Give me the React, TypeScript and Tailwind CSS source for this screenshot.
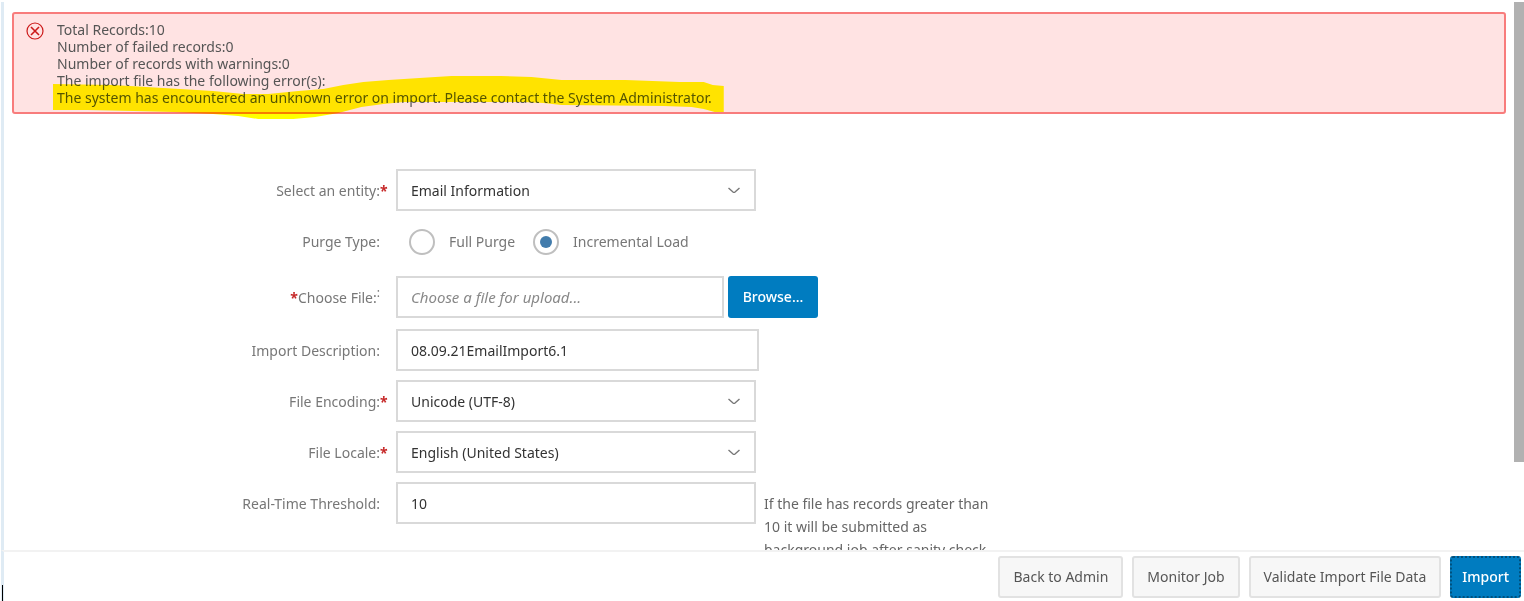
import clsx from "clsx"
import { ReactNode, useState } from "react"

const boxClass =
  "h-[42px] border-2 border-[#d9d9d9] bg-white px-[13px] text-sm text-[#333] outline-none"

const summary = [
  "Total Records:10",
  "Number of failed records:0",
  "Number of records with warnings:0",
  "The import file has the following error(s):",
]

const ErrorIcon = () => (
  <svg
    className="mt-2 ml-3 size-[18px] shrink-0"
    viewBox="0 0 18 18"
    fill="none"
    stroke="#cc1919"
    aria-hidden="true"
  >
    <circle cx="9" cy="9" r="8" strokeWidth="1.2" />
    <path d="M5 5l8 8M13 5l-8 8" strokeWidth="1.6" />
  </svg>
)

// Marker pen stroke over the last line of the message
const Highlight = () => (
  <svg
    className="pointer-events-none absolute -top-[13px] -left-1 h-[43px] w-[calc(100%+16px)] mix-blend-multiply"
    viewBox="0 0 670 43"
    preserveAspectRatio="none"
    aria-hidden="true"
  >
    <path
      fill="#ffff00"
      d="M0 8 L60 9 L110 12 L160 15 L190 18 L215 18 L245 15 L270 13 L290 9 L310 6 L335 4 L366 2 L398 0 L447 0 L478 1 L508 4 L572 4 L626 6 L650 6 L659 9 L670 10 L670 36 L661 36 L650 33 L638 31 L610 30 L508 29 L490 27 L470 26 L440 26 L350 26 L330 28 L308 31 L285 37 L262 41 L240 43 L205 43 L185 40 L160 38 L120 36 L80 35 L34 34 L0 34 Z"
    />
  </svg>
)

const Alert = () => (
  <div
    role="alert"
    className="mr-2 ml-2 flex h-[102px] rounded-[3px] border-2 border-[#f87c7c] bg-[#ffe3e3] text-sm leading-[17px] text-[#555]"
  >
    <ErrorIcon />
    <div className="mt-[7px] ml-[13px]">
      {summary.map((line) => (
        <div key={line}>{line}</div>
      ))}
      <div className="relative w-fit">
        The system has encountered an unknown error on import. Please contact
        the System Administrator.
        <Highlight />
      </div>
    </div>
  </div>
)

const Row = ({
  label,
  htmlFor,
  required,
  className,
  children,
}: {
  label: ReactNode
  htmlFor?: string
  required?: boolean
  className?: string
  children: ReactNode
}) => (
  <div className={clsx("grid grid-cols-[392px_1fr]", className)}>
    <div className="flex h-[42px] items-center justify-end pt-0.5 text-sm text-[#777]">
      <label htmlFor={htmlFor}>{label}</label>
      <span className="w-4 font-bold text-[#c62828]">{required && "*"}</span>
    </div>
    <div className="flex">{children}</div>
  </div>
)

const SelectBox = ({ id, options }: { id: string; options: string[] }) => (
  <div className="relative w-[360px]">
    <select id={id} className={clsx(boxClass, "w-full appearance-none pt-0.5")}>
      {options.map((option) => (
        <option key={option}>{option}</option>
      ))}
    </select>
    <svg
      className="pointer-events-none absolute top-[18px] right-4 h-2 w-3"
      viewBox="0 0 12 8"
      fill="none"
      stroke="#777"
      strokeWidth="1.4"
      aria-hidden="true"
    >
      <path d="M0.5 1L5 5Q6 5.8 7 5L11.5 1" />
    </svg>
  </div>
)

const Radio = ({
  label,
  checked,
  onChange,
}: {
  label: string
  checked: boolean
  onChange: () => void
}) => (
  <label className="flex items-center gap-[14px] text-sm text-[#777]">
    <input
      type="radio"
      name="purge"
      checked={checked}
      onChange={onChange}
      className="size-[26px] appearance-none rounded-full border-2 border-[#bfbfbf] bg-white bg-clip-content p-[5px] checked:bg-[#427cac]"
    />
    {label}
  </label>
)

const FooterButton = ({ children }: { children: ReactNode }) => (
  <button
    type="button"
    className="h-[42px] rounded-[3px] border-2 border-[#e2e2e2] bg-[#f7f7f7] px-[13px] text-sm text-[#555]"
  >
    {children}
  </button>
)

const App = () => {
  const [purge, setPurge] = useState("incremental")
  const [description, setDescription] = useState("08.09.21EmailImport6.1")
  const [threshold, setThreshold] = useState("10")

  return (
    <div className="flex h-screen flex-col bg-white pt-0.5 pl-px font-['Noto_Sans',sans-serif]">
      <div className="flex min-h-0 grow border-l-[3px] border-[#dfebf4]">
        <main className="grow overflow-hidden pt-[10px]">
          <Alert />
          <form className="mt-[55px] flex flex-col gap-[9px]">
            <Row label="Select an entity:" htmlFor="entity" required>
              <SelectBox id="entity" options={["Email Information"]} />
            </Row>
            <Row label="Purge Type:">
              <div className="ml-[13px] flex gap-[18px] pt-0.5">
                <Radio
                  label="Full Purge"
                  checked={purge === "full"}
                  onChange={() => setPurge("full")}
                />
                <Radio
                  label="Incremental Load"
                  checked={purge === "incremental"}
                  onChange={() => setPurge("incremental")}
                />
              </div>
            </Row>
            <Row
              className="pt-[5px] pb-0.5"
              htmlFor="file"
              label={
                <>
                  <span className="font-bold text-[#c62828]">*</span>Choose
                  File:<sup className="text-xs">:</sup>
                </>
              }
            >
              <input
                id="file"
                readOnly
                placeholder="Choose a file for upload..."
                className={clsx(
                  boxClass,
                  "w-[328px] placeholder:text-[15px] placeholder:text-[#888] placeholder:italic"
                )}
              />
              <button
                type="button"
                className="ml-1 h-[42px] w-[90px] rounded-[3px] bg-[#007cc0] text-sm font-medium text-white"
              >
                Browse...
              </button>
            </Row>
            <Row label="Import Description:" htmlFor="description">
              <input
                id="description"
                value={description}
                onChange={(e) => setDescription(e.target.value)}
                className={clsx(boxClass, "w-[363px]")}
              />
            </Row>
            <Row label="File Encoding:" htmlFor="encoding" required>
              <SelectBox id="encoding" options={["Unicode (UTF-8)"]} />
            </Row>
            <Row label="File Locale:" htmlFor="locale" required>
              <SelectBox id="locale" options={["English (United States)"]} />
            </Row>
            <Row label="Real-Time Threshold:" htmlFor="threshold">
              <input
                id="threshold"
                value={threshold}
                onChange={(e) => setThreshold(e.target.value)}
                className={clsx(boxClass, "w-[360px]")}
              />
              <p className="mt-[10px] ml-2 w-60 text-sm leading-[23px] text-[#666]">
                If the file has records greater than 10 it will be submitted as
                background job after sanity check
              </p>
            </Row>
          </form>
        </main>
        <div className="w-[10px] shrink-0">
          <div className="h-[84%] bg-[#b1b1b1]" />
        </div>
      </div>
      <footer className="flex h-[51px] shrink-0 justify-end gap-[9px] border-t-2 border-l-[3px] border-t-[#f2f2f2] border-l-[#dfebf4] pt-1 pr-[3px]">
        <FooterButton>Back to Admin</FooterButton>
        <FooterButton>Monitor Job</FooterButton>
        <FooterButton>Validate Import File Data</FooterButton>
        <button
          type="button"
          className="h-[42px] rounded-[3px] border-2 border-dotted border-[#00507c] bg-[#007cc0] px-[10px] text-sm font-medium text-white"
        >
          Import
        </button>
      </footer>
      <div className="absolute bottom-0 left-0.5 h-4 w-px bg-black" />
    </div>
  )
}

export default App
